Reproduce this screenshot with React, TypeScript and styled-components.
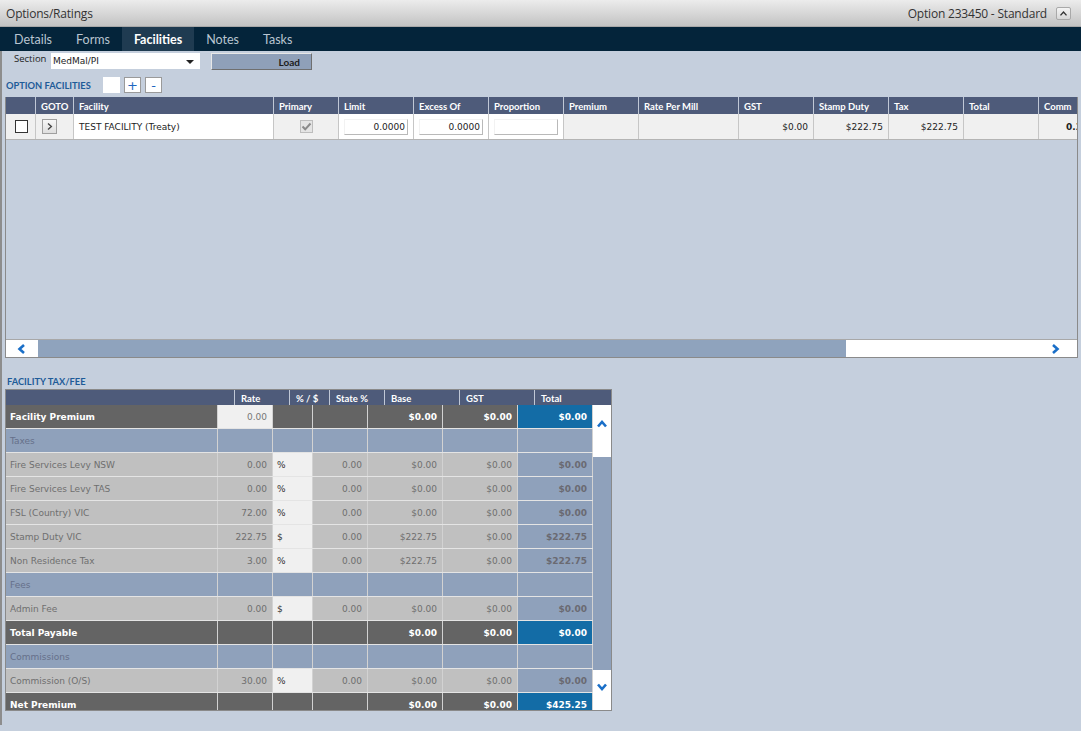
import React from "react";
import styled, { createGlobalStyle, css } from "styled-components";

const GlobalStyle = createGlobalStyle`
  html, body { margin: 0; padding: 0; background: #c5cfdd; }
  * { box-sizing: border-box; }
`;

const DATA_FONT = `"DejaVu Sans", Verdana, sans-serif`;
const HEAD_FONT = `Lato, "Open Sans", sans-serif`;

const Frame = styled.div`
  width: 1081px;
  height: 731px;
  display: flex;
  flex-direction: column;
  background: #c5cfdd;
  overflow: hidden;
`;

const TitleBar = styled.div`
  height: 27px;
  flex: none;
  display: flex;
  align-items: center;
  padding: 0 10px 0 6px;
  background: linear-gradient(#ececec, #c3c3c3);
  border-bottom: 1px solid #a8a8a8;
  font-family: "Open Sans", sans-serif;
  font-size: 12px;
  color: #333;
  letter-spacing: -0.2px;
`;

const TitleText = styled.div`
  flex: 1;
`;

const TitleRight = styled.div`
  margin-right: 9px;
`;

const CollapseButton = styled.div`
  width: 15px;
  height: 13px;
  border: 1px solid #a9a9a9;
  border-radius: 2px;
  background: linear-gradient(#f4f4f4, #d8d8d8);
  display: flex;
  align-items: center;
  justify-content: center;
`;

const Body = styled.div`
  flex: 1;
  display: flex;
  flex-direction: column;
  border-left: 2px solid #8d8d8d;
  margin-bottom: 6px;
`;

const TabBar = styled.div`
  height: 24px;
  flex: none;
  display: flex;
  background: #04243a;
  margin-left: -2px;
  padding-left: 2px;
`;

const Tab = styled.div<{ $active?: boolean }>`
  padding: 0 12px;
  display: flex;
  align-items: center;
  font-family: ${HEAD_FONT};
  font-size: 12.5px;
  color: #b9c5d1;
  ${(p) =>
    p.$active &&
    css`
      background: #1f3b51;
      color: #ffffff;
      font-weight: 700;
    `}
`;

const Toolbar = styled.div`
  height: 17px;
  margin-top: 2px;
  display: flex;
  align-items: stretch;
  padding-left: 12px;
`;

const FieldLabel = styled.div`
  font-family: "Open Sans", sans-serif;
  font-size: 9.5px;
  color: #222;
  width: 37px;
  line-height: 12px;
`;

const SelectBox = styled.div`
  width: 149px;
  height: 16px;
  background: #fff;
  display: flex;
  align-items: center;
  justify-content: space-between;
  padding: 0 6px 0 2px;
  font-family: ${DATA_FONT};
  font-size: 9px;
  color: #222;
`;

const SelectArrow = styled.div`
  width: 0;
  height: 0;
  border-left: 4px solid transparent;
  border-right: 4px solid transparent;
  border-top: 4px solid #222;
  margin-top: 2px;
`;

const LoadButton = styled.div`
  width: 101px;
  margin-left: 11px;
  background: #8fa0b9;
  border: 1px solid #6f6f6f;
  border-top-color: #e8e8e8;
  border-left-color: #e8e8e8;
  display: flex;
  align-items: center;
  justify-content: flex-end;
  padding-right: 11px;
  font-family: ${HEAD_FONT};
  font-size: 10px;
  font-weight: 700;
  color: #1c1c1c;
`;

const FacilitiesBar = styled.div`
  height: 16px;
  margin-top: 7px;
  display: flex;
  align-items: center;
  padding-left: 4px;
`;

const SectionTitle = styled.div<{ $width?: number }>`
  width: ${(p) => p.$width ?? 97}px;
  font-family: ${HEAD_FONT};
  font-size: 9.3px;
  font-weight: 700;
  color: #1e5b98;
`;

const SmallBox = styled.div`
  width: 17px;
  height: 16px;
  background: #fff;
`;

const IconButton = styled.div`
  width: 17px;
  height: 16px;
  margin-left: 4px;
  background: #fff;
  border: 1px solid #9a9a9a;
  display: flex;
  align-items: center;
  justify-content: center;
  font-family: ${DATA_FONT};
  font-size: 13px;
  line-height: 1;
  color: #1e66c0;
`;

const fcols = [30, 38, 200, 65, 75, 75, 75, 75, 100, 75, 75, 75, 75, 75];
const fTemplate = fcols.map((c) => `${c}px`).join(" ");

const Grid = styled.div`
  margin: 4px 3px 0 3px;
  height: 261px;
  border: 1px solid #8a8a8a;
  border-top: none;
  display: flex;
  flex-direction: column;
  overflow: hidden;
`;

const GridHeader = styled.div`
  display: grid;
  grid-template-columns: ${fTemplate};
  height: 17px;
  background: #4e5b7a;
  flex: none;
`;

const HeaderCell = styled.div`
  border-right: 1px solid #c0c8d6;
  padding: 1px 0 0 5px;
  display: flex;
  align-items: center;
  font-family: ${HEAD_FONT};
  font-size: 9.5px;
  font-weight: 700;
  color: #fff;
  white-space: nowrap;
  overflow: hidden;
`;

const GridRow = styled.div`
  display: grid;
  grid-template-columns: ${fTemplate};
  height: 26px;
  border-bottom: 1px solid #b4b4b4;
  flex: none;
`;

const Cell = styled.div<{ $bg?: string; $align?: "left" | "right" | "center"; $bold?: boolean }>`
  background: ${(p) => p.$bg ?? "#fff"};
  border-right: 1px solid #c6c6c6;
  display: flex;
  align-items: center;
  justify-content: ${(p) =>
    p.$align === "right" ? "flex-end" : p.$align === "center" ? "center" : "flex-start"};
  padding: 0 5px;
  font-family: ${DATA_FONT};
  font-size: 9px;
  color: #222;
  font-weight: ${(p) => (p.$bold ? 700 : 400)};
  white-space: nowrap;
  overflow: hidden;
`;

const CheckBox = styled.div`
  width: 13px;
  height: 13px;
  background: #fff;
  border: 1px solid #333;
  margin-left: 4px;
`;

const DisabledCheck = styled.div`
  width: 13px;
  height: 13px;
  background: #e4e4e4;
  border: 1px solid #bdbdbd;
  display: flex;
  align-items: center;
  justify-content: center;
`;

const GotoButton = styled.div`
  width: 15px;
  height: 15px;
  margin-left: 1px;
  background: linear-gradient(#f7f7f7, #dedede);
  border: 1px solid #9f9f9f;
  display: flex;
  align-items: center;
  justify-content: center;
`;

const NumInput = styled.div`
  width: 65px;
  height: 16px;
  background: #fff;
  border-top: 1px solid #f2f2f2;
  border-left: 1px solid #f2f2f2;
  border-bottom: 1px solid #b9b9b9;
  border-right: 1px solid #b9b9b9;
  display: flex;
  align-items: center;
  justify-content: flex-end;
  padding-right: 2px;
  font-family: ${DATA_FONT};
  font-size: 9px;
  color: #222;
`;

const GridFill = styled.div`
  flex: 1;
  background: #c5cfdd;
`;

const HScroll = styled.div`
  height: 18px;
  flex: none;
  display: flex;
  background: #fff;
  border-top: 1px solid #a8a8a8;
`;

const ScrollCap = styled.div<{ $w: number; $justify?: string }>`
  width: ${(p) => p.$w}px;
  flex: none;
  display: flex;
  align-items: center;
  justify-content: ${(p) => p.$justify ?? "center"};
`;

const HThumb = styled.div`
  width: 808px;
  background: #8fa3bd;
`;

const TaxLabelRow = styled.div`
  height: 15px;
  margin-top: 16px;
  padding-left: 5px;
  display: flex;
  align-items: center;
`;

const tcols = [212, 55, 40, 55, 75, 75, 75];
const tHeadCols = [229, 55, 40, 55, 75, 75, 75];

const TaxTable = styled.div`
  width: 607px;
  height: 322px;
  margin-left: 3px;
  border: 1px solid #8a8a8a;
  display: flex;
  flex-direction: column;
  overflow: hidden;
`;

const TaxHeader = styled.div`
  display: grid;
  grid-template-columns: ${tHeadCols.map((c) => `${c}px`).join(" ")};
  height: 15px;
  flex: none;
  background: #4e5b7a;
`;

const TaxHeadCell = styled.div`
  border-right: 1px solid #c0c8d6;
  padding: 1px 0 0 6px;
  display: flex;
  align-items: center;
  font-family: ${HEAD_FONT};
  font-size: 9.5px;
  font-weight: 700;
  color: #fff;
  white-space: nowrap;
  &:last-child { border-right: none; }
`;

const TaxBody = styled.div`
  flex: 1;
  display: flex;
  overflow: hidden;
`;

const TaxRows = styled.div`
  width: 587px;
  flex: none;
  display: flex;
  flex-direction: column;
`;

type Tone = "dark" | "section" | "item" | "light" | "blue" | "itemTotal";

const toneBg: Record<Tone, string> = {
  dark: "#646464",
  section: "#8fa1bb",
  item: "#c0c0c0",
  light: "#f0f0f0",
  blue: "#136ca6",
  itemTotal: "#8fa1bb",
};

const toneColor: Record<Tone, string> = {
  dark: "#ffffff",
  section: "#66708a",
  item: "#6f6f6f",
  light: "#777777",
  blue: "#ffffff",
  itemTotal: "#6a6a72",
};

const TaxRow = styled.div`
  display: grid;
  grid-template-columns: ${tcols.map((c) => `${c}px`).join(" ")};
  height: 24px;
  flex: none;
  border-bottom: 1px solid #e4e4e4;
`;

const TaxCell = styled.div<{ $tone: Tone; $align?: "left" | "right"; $bold?: boolean; $ink?: string }>`
  background: ${(p) => toneBg[p.$tone]};
  color: ${(p) => p.$ink ?? toneColor[p.$tone]};
  border-right: 1px solid #d2d2d2;
  display: flex;
  align-items: center;
  justify-content: ${(p) => (p.$align === "right" ? "flex-end" : "flex-start")};
  padding: ${(p) => (p.$align === "right" ? "0 5px 0 0" : "0 0 0 4px")};
  font-family: ${DATA_FONT};
  font-size: 9px;
  font-weight: ${(p) => (p.$bold ? 700 : 400)};
  white-space: nowrap;
  overflow: hidden;
`;

const VScroll = styled.div`
  width: 18px;
  flex: none;
  display: flex;
  flex-direction: column;
  background: #8fa1bb;
`;

const VCap = styled.div<{ $h: number; $pad: number }>`
  height: ${(p) => p.$h}px;
  background: #fff;
  display: flex;
  justify-content: center;
  padding-top: ${(p) => p.$pad}px;
`;

const VTrack = styled.div`
  flex: 1;
`;

const Chevron = ({ dir, color = "#1a6fc8", size = 12, stroke = 2.6 }: { dir: "up" | "down" | "left" | "right"; color?: string; size?: number; stroke?: number }) => {
  const paths: Record<string, string> = {
    up: "M2 8.5 L6 4 L10 8.5",
    down: "M2 3.5 L6 8 L10 3.5",
    left: "M8 2 L3.5 6 L8 10",
    right: "M4 2 L8.5 6 L4 10",
  };
  return (
    <svg width={size} height={size} viewBox="0 0 12 12">
      <path d={paths[dir]} fill="none" stroke={color} strokeWidth={stroke} strokeLinejoin="miter" strokeLinecap="butt" />
    </svg>
  );
};

type TaxRowData =
  | { kind: "dark"; label: string; rate?: string; base: string; gst: string; total: string }
  | { kind: "section"; label: string }
  | { kind: "item"; label: string; rate: string; unit: string; state: string; base: string; gst: string; total: string };

const taxRows: TaxRowData[] = [
  { kind: "dark", label: "Facility Premium", rate: "0.00", base: "$0.00", gst: "$0.00", total: "$0.00" },
  { kind: "section", label: "Taxes" },
  { kind: "item", label: "Fire Services Levy NSW", rate: "0.00", unit: "%", state: "0.00", base: "$0.00", gst: "$0.00", total: "$0.00" },
  { kind: "item", label: "Fire Services Levy TAS", rate: "0.00", unit: "%", state: "0.00", base: "$0.00", gst: "$0.00", total: "$0.00" },
  { kind: "item", label: "FSL (Country) VIC", rate: "72.00", unit: "%", state: "0.00", base: "$0.00", gst: "$0.00", total: "$0.00" },
  { kind: "item", label: "Stamp Duty VIC", rate: "222.75", unit: "$", state: "0.00", base: "$222.75", gst: "$0.00", total: "$222.75" },
  { kind: "item", label: "Non Residence Tax", rate: "3.00", unit: "%", state: "0.00", base: "$222.75", gst: "$0.00", total: "$222.75" },
  { kind: "section", label: "Fees" },
  { kind: "item", label: "Admin Fee", rate: "0.00", unit: "$", state: "0.00", base: "$0.00", gst: "$0.00", total: "$0.00" },
  { kind: "dark", label: "Total Payable", base: "$0.00", gst: "$0.00", total: "$0.00" },
  { kind: "section", label: "Commissions" },
  { kind: "item", label: "Commission (O/S)", rate: "30.00", unit: "%", state: "0.00", base: "$0.00", gst: "$0.00", total: "$0.00" },
  { kind: "dark", label: "Net Premium", base: "$0.00", gst: "$0.00", total: "$425.25" },
];

const renderTaxRow = (r: TaxRowData, i: number) => {
  if (r.kind === "section") {
    return (
      <TaxRow key={i}>
        <TaxCell $tone="section">{r.label}</TaxCell>
        {[0, 1, 2, 3, 4, 5].map((k) => (
          <TaxCell key={k} $tone="section" />
        ))}
      </TaxRow>
    );
  }
  if (r.kind === "dark") {
    return (
      <TaxRow key={i}>
        <TaxCell $tone="dark" $bold>{r.label}</TaxCell>
        {r.rate !== undefined ? (
          <TaxCell $tone="light" $align="right">{r.rate}</TaxCell>
        ) : (
          <TaxCell $tone="dark" />
        )}
        <TaxCell $tone="dark" />
        <TaxCell $tone="dark" />
        <TaxCell $tone="dark" $align="right" $bold>{r.base}</TaxCell>
        <TaxCell $tone="dark" $align="right" $bold>{r.gst}</TaxCell>
        <TaxCell $tone="blue" $align="right" $bold>{r.total}</TaxCell>
      </TaxRow>
    );
  }
  return (
    <TaxRow key={i}>
      <TaxCell $tone="item">{r.label}</TaxCell>
      <TaxCell $tone="item" $align="right">{r.rate}</TaxCell>
      <TaxCell $tone="light" $ink="#333">{r.unit}</TaxCell>
      <TaxCell $tone="item" $align="right">{r.state}</TaxCell>
      <TaxCell $tone="item" $align="right">{r.base}</TaxCell>
      <TaxCell $tone="item" $align="right">{r.gst}</TaxCell>
      <TaxCell $tone="itemTotal" $align="right" $bold>{r.total}</TaxCell>
    </TaxRow>
  );
};

const headers = ["", "GOTO", "Facility", "Primary", "Limit", "Excess Of", "Proportion", "Premium", "Rate Per Mill", "GST", "Stamp Duty", "Tax", "Total", "Comm"];

export default function App() {
  return (
    <>
      <GlobalStyle />
      <Frame>
        <TitleBar>
          <TitleText>Options/Ratings</TitleText>
          <TitleRight>Option 233450 - Standard</TitleRight>
          <CollapseButton>
            <Chevron dir="up" color="#333" size={9} stroke={1.8} />
          </CollapseButton>
        </TitleBar>
        <Body>
          <TabBar>
            <Tab>Details</Tab>
            <Tab>Forms</Tab>
            <Tab $active>Facilities</Tab>
            <Tab>Notes</Tab>
            <Tab>Tasks</Tab>
          </TabBar>

          <Toolbar>
            <FieldLabel>Section</FieldLabel>
            <SelectBox>
              <span>MedMal/PI</span>
              <SelectArrow />
            </SelectBox>
            <LoadButton>Load</LoadButton>
          </Toolbar>

          <FacilitiesBar>
            <SectionTitle>OPTION FACILITIES</SectionTitle>
            <SmallBox />
            <IconButton>+</IconButton>
            <IconButton>-</IconButton>
          </FacilitiesBar>

          <Grid>
            <GridHeader>
              {headers.map((h, i) => (
                <HeaderCell key={i}>{h}</HeaderCell>
              ))}
            </GridHeader>
            <GridRow>
              <Cell $bg="#f0f0f0">
                <CheckBox />
              </Cell>
              <Cell $bg="#f0f0f0" $align="left">
                <GotoButton>
                  <Chevron dir="right" color="#444" size={9} stroke={1.8} />
                </GotoButton>
              </Cell>
              <Cell>TEST FACILITY (Treaty)</Cell>
              <Cell $bg="#f0f0f0" $align="center">
                <DisabledCheck>
                  <svg width="11" height="11" viewBox="0 0 11 11">
                    <path d="M1.5 5.5 L4.2 8.3 L9.5 2.5" fill="none" stroke="#8a8a8a" strokeWidth="2" />
                  </svg>
                </DisabledCheck>
              </Cell>
              <Cell $align="center">
                <NumInput>0.0000</NumInput>
              </Cell>
              <Cell $align="center">
                <NumInput>0.0000</NumInput>
              </Cell>
              <Cell $align="center">
                <NumInput />
              </Cell>
              <Cell $bg="#f0f0f0" />
              <Cell $bg="#f0f0f0" />
              <Cell $bg="#f0f0f0" $align="right">$0.00</Cell>
              <Cell $bg="#f0f0f0" $align="right">$222.75</Cell>
              <Cell $bg="#f0f0f0" $align="right">$222.75</Cell>
              <Cell $bg="#f0f0f0" />
              <Cell $bg="#f0f0f0" $bold>
                <span style={{ paddingLeft: 22 }}>0.30</span>
              </Cell>
            </GridRow>
            <GridFill />
            <HScroll>
              <ScrollCap $w={32}>
                <Chevron dir="left" />
              </ScrollCap>
              <HThumb />
              <ScrollCap $w={231} $justify="flex-end">
                <span style={{ marginRight: 16, display: "flex" }}>
                  <Chevron dir="right" />
                </span>
              </ScrollCap>
            </HScroll>
          </Grid>

          <TaxLabelRow>
            <SectionTitle $width={200}>FACILITY TAX/FEE</SectionTitle>
          </TaxLabelRow>
          <TaxTable>
            <TaxHeader>
              {["", "Rate", "% / $", "State %", "Base", "GST", "Total"].map((h, i) => (
                <TaxHeadCell key={i}>{h}</TaxHeadCell>
              ))}
            </TaxHeader>
            <TaxBody>
              <TaxRows>{taxRows.map(renderTaxRow)}</TaxRows>
              <VScroll>
                <VCap $h={52} $pad={13}>
                  <Chevron dir="up" />
                </VCap>
                <VTrack />
                <VCap $h={40} $pad={11}>
                  <Chevron dir="down" />
                </VCap>
              </VScroll>
            </TaxBody>
          </TaxTable>
        </Body>
      </Frame>
    </>
  );
}
